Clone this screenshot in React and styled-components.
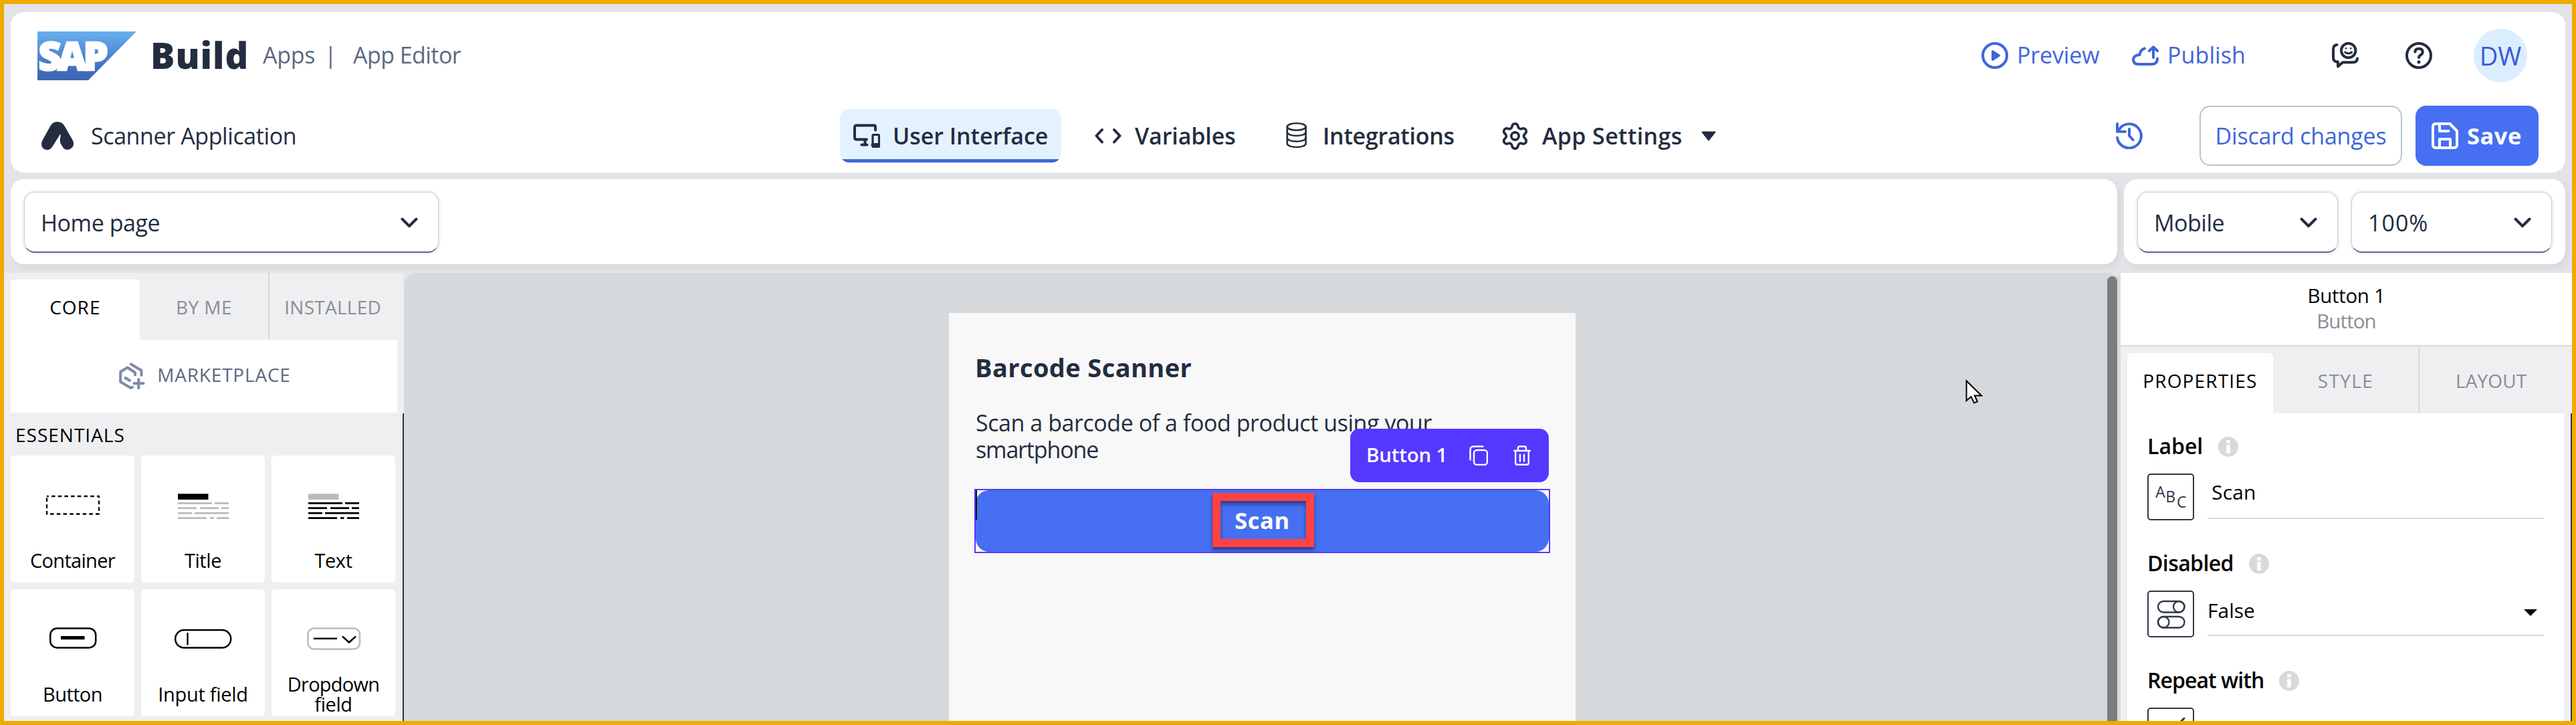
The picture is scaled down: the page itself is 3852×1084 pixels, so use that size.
import React from "react";
import styled, { createGlobalStyle, css } from "styled-components";
import { Settings } from "lucide-react";

const INK = "#232d3f";
const BLUE = "#3f66db";
const VIOLET = "#5538ff";

const GlobalStyle = createGlobalStyle`
  *, *::before, *::after { box-sizing: border-box; }
  body {
    margin: 0;
    font-family: "Open Sans", "Noto Sans", sans-serif;
    color: ${INK};
  }
`;

const Frame = styled.div`
  width: 3852px;
  height: 1084px;
  overflow: hidden;
  display: flex;
  flex-direction: column;
  border: 6px solid #f0ab00;
  background: #e3e4e8;
`;

const Text = styled.span`
  display: block;
  flex: none;
  white-space: nowrap;
  font-size: ${(p) => p.$size || 34}px;
  font-weight: ${(p) => p.$weight || 400};
  letter-spacing: ${(p) => p.$track || 0}px;
  line-height: ${(p) => p.$line || 40}px;
  color: ${(p) => p.$color || "inherit"};
  padding-bottom: ${(p) => (p.$lift || 0) * 2}px;
`;

const Icon = styled.svg`
  display: block;
  flex: none;
  width: ${(p) => p.$w || 40}px;
  height: ${(p) => p.$h || 40}px;
  fill: none;
  stroke: currentColor;
  stroke-width: ${(p) => p.$stroke || 4};
  stroke-linecap: round;
  stroke-linejoin: round;
`;

/* ---------- header ---------- */

const Header = styled.header`
  margin: 12px 10px 0;
  height: 240px;
  flex: none;
  border-radius: 20px;
  background: #fff;
`;

const BrandRow = styled.div`
  height: 130px;
  padding: 0 57px 0 40px;
  display: flex;
  align-items: center;
`;

const Logo = styled.svg`
  display: block;
  width: 148px;
  height: 73px;
  margin-right: 21px;
  overflow: visible;
`;

const Product = styled.div`
  width: 168px;
`;

const Crumb = styled.div`
  width: ${(p) => p.$width}px;
`;

const HeaderLink = styled.a`
  display: flex;
  align-items: center;
  gap: 13px;
  width: ${(p) => p.$width}px;
  color: ${BLUE};
`;

const Push = styled.div`
  margin-left: auto;
  display: flex;
  align-items: center;
`;

const Tools = styled.div`
  display: flex;
  align-items: center;
  gap: 70px;
  margin-right: 62px;
`;

const Avatar = styled.div`
  width: 80px;
  height: 80px;
  border-radius: 50%;
  background: #dbeeff;
  color: #3a5bd7;
  display: flex;
  align-items: center;
  justify-content: center;
`;

const NavRow = styled.div`
  height: 110px;
  padding-right: 40px;
  display: flex;
  align-items: center;
`;

const AppName = styled.div`
  width: 1240px;
  padding-left: 46px;
  display: flex;
  align-items: center;
  gap: 26px;
`;

const NavTabs = styled.nav`
  display: flex;
  gap: 30px;
`;

const NavTab = styled.div`
  width: ${(p) => p.$width}px;
  height: 80px;
  padding-left: 20px;
  display: flex;
  align-items: center;
  gap: ${(p) => p.$gap || 20}px;
  border-radius: 14px;
  ${(p) =>
    p.$active &&
    css`
      background: linear-gradient(#e4f2ff 75px, ${BLUE} 75px);
    `}
`;

const MenuCaret = styled.div`
  margin-left: 7px;
`;

const GearSlot = styled.div`
  width: 40px;
  height: 40px;
  display: flex;
  align-items: center;
  justify-content: center;
  svg { flex: none; }
`;

const DiscardButton = styled.div`
  width: 303px;
  height: 90px;
  margin: 0 20px 0 85px;
  border: 2px solid #bcc2c9;
  border-radius: 16px;
  display: flex;
  align-items: center;
  justify-content: center;
  color: ${BLUE};
`;

const SaveButton = styled.div`
  width: 184px;
  height: 90px;
  padding-left: 24px;
  border-radius: 16px;
  background: #4670f1;
  color: #fff;
  display: flex;
  align-items: center;
  gap: 13px;
`;

const HistoryLink = styled.div`
  color: ${BLUE};
`;

/* ---------- page bar ---------- */

const BarRow = styled.div`
  margin: 10px 10px 0;
  height: 127px;
  flex: none;
  display: flex;
  gap: 10px;
`;

const Bar = styled.div`
  width: ${(p) => p.$width}px;
  padding: 0 20px;
  display: flex;
  align-items: center;
  gap: 20px;
  border-radius: 20px;
  background: #fff;
  box-shadow: 4px 5px 8px rgba(40, 40, 50, 0.06);
`;

const SelectBox = styled.div`
  width: ${(p) => p.$width}px;
  height: 91px;
  margin-top: 2px;
  padding: 1px 30px 0 24px;
  display: flex;
  align-items: center;
  justify-content: space-between;
  border: 1px solid #ccd2da;
  border-bottom: 2px solid #5b6b82;
  border-radius: 16px;
  box-shadow: 0 0 4px rgba(91, 107, 130, 0.32);
`;

/* ---------- workspace ---------- */

const Workspace = styled.main`
  margin-top: 13px;
  flex: 1;
  min-height: 0;
  display: flex;
`;

const Library = styled.aside`
  width: 598px;
  flex: none;
  display: flex;
  flex-direction: column;
  background: #eeeff1;
`;

const TabStrip = styled.div`
  height: 100px;
  flex: none;
  padding: 0 ${(p) => p.$right || 10}px 0 10px;
  display: grid;
  grid-template-columns: repeat(3, 1fr);
`;

const PanelTab = styled.div`
  display: flex;
  align-items: center;
  justify-content: center;
  color: #8b8e96;
  padding-top: 10px;
  ${(p) =>
    p.$divided &&
    css`
      margin-right: -2px;
      border-right: 2px solid #d6d8db;
    `}
  ${(p) =>
    p.$active &&
    css`
      margin-top: 10px;
      padding-top: 0;
      border-radius: 6px 6px 0 0;
      background: #fff;
      color: #000;
    `}
`;

const Marketplace = styled.div`
  height: 110px;
  flex: none;
  margin: 0 10px;
  padding-left: 2px;
  border-bottom: 2px solid #f7f7f8;
  background: #fff;
  display: flex;
  align-items: center;
  justify-content: center;
  gap: 18px;
  color: #5b6980;
  svg { color: #7d8ba7; }
`;

const LibraryBody = styled.div`
  flex: 1;
  min-height: 0;
  padding-left: 10px;
  border-right: 2px solid #2f3547;
`;

const SectionTitle = styled.div`
  height: 63px;
  padding: 1px 0 0 7px;
  display: flex;
  align-items: center;
  color: #000;
`;

const CardGrid = styled.div`
  display: grid;
  grid-template-columns: repeat(3, 185px);
  gap: 10px;
`;

const Card = styled.div`
  height: 190px;
  border-radius: 6px;
  background: #fff;
  color: #000;
`;

const CardLabel = styled.div`
  height: 60px;
  padding-top: 1px;
  display: flex;
  flex-direction: column;
  align-items: center;
  justify-content: center;
`;

const Canvas = styled.section`
  position: relative;
  flex: 1;
  padding-top: 60px;
  display: flex;
  justify-content: center;
  border-radius: 20px 20px 0 0;
  background: #d5d9dc;
`;

const ScrollTrack = styled.div`
  position: absolute;
  top: 5px;
  right: 0;
  bottom: 0;
  width: 20px;
  border-right: 5px solid #d8d9dd;
`;

const ScrollThumb = styled.div`
  height: 100%;
  border-radius: 8px 8px 0 0;
  background: #7b7c7d;
`;

const Pointer = styled.svg`
  position: absolute;
  left: 2334px;
  top: 158px;
  width: 30px;
  height: 40px;
`;

const Phone = styled.div`
  width: 937px;
  padding: 55px 40px 0;
  background: #f8f8f8;
`;

const PageTitle = styled.div`
  height: 89px;
  margin-left: -1px;
`;

const Paragraph = styled.div`
  height: 121px;
`;

const Selection = styled.div`
  position: relative;
  height: 92px;
  background: #fff;
  outline: 2px solid ${VIOLET};
`;

const AppButton = styled.div`
  height: 100%;
  border-radius: 20px;
  background: #4670f1;
  color: #fff;
  display: flex;
  align-items: center;
  justify-content: center;
`;

const DropMark = styled.div`
  position: absolute;
  left: 0;
  top: 0;
  width: 2px;
  height: 44px;
  background: #0c0c12;
`;

const Highlight = styled.div`
  position: absolute;
  left: 354px;
  top: 4px;
  width: 152px;
  height: 81px;
  border: 12px solid #ff4343;
  box-shadow: 0 4px 5px rgba(20, 20, 50, 0.6), inset 0 5px 6px rgba(20, 20, 60, 0.55);
`;

const SelectionBar = styled.div`
  position: absolute;
  right: 0;
  top: -92px;
  width: 297px;
  height: 80px;
  padding: 0 27px 0 24px;
  border-radius: 14px;
  background: ${VIOLET};
  color: #fff;
  display: flex;
  align-items: center;
  justify-content: space-between;
`;

const BarIcons = styled.div`
  display: flex;
  gap: 38px;
`;

/* ---------- inspector ---------- */

const Inspector = styled.aside`
  width: 675px;
  flex: none;
  display: flex;
  flex-direction: column;
  background: #eeeff1;
`;

const InspectorHead = styled.div`
  height: 110px;
  flex: none;
  padding-top: 15px;
  border-bottom: 2px solid #d8d9de;
  background: #fff;
  display: flex;
  flex-direction: column;
  align-items: center;
`;

const InspectorBody = styled.div`
  flex: 1;
  min-height: 0;
  overflow: hidden;
  padding: 0 10px;
  border-right: 2px solid #2f3547;
`;

const PropertyList = styled.div`
  height: 100%;
  padding: 25px 30px 0;
  background: #fff;
  color: #000;
`;

const Property = styled.div`
  height: 175px;
`;

const PropertyName = styled.div`
  height: 50px;
  margin-bottom: 15px;
  display: flex;
  align-items: center;
  gap: 23px;
`;

const PropertyControl = styled.div`
  display: flex;
  gap: 20px;
`;

const BindingBox = styled.div`
  width: 70px;
  height: 70px;
  flex: none;
  border: 2px solid #2f3647;
  border-radius: 5px;
  color: #2f3647;
  svg { margin: -2px; }
`;

const Field = styled.div`
  flex: 1;
  height: 68px;
  padding: 0 10px 0 ${(p) => p.$indent || 0}px;
  border-bottom: 2px solid #d8d9de;
  display: flex;
  align-items: center;
  justify-content: space-between;
`;

/* ---------- drawings ---------- */

const SapLogo = () => (
  <Logo viewBox="0 0 148 73">
    <defs>
      <linearGradient id="sap" x1="0" y1="0" x2="0" y2="1">
        <stop offset="0" stopColor="#69b0f0" />
        <stop offset="0.8" stopColor="#3f6cba" />
        <stop offset="1" stopColor="#3c65b1" />
      </linearGradient>
    </defs>
    <path d="M0 0H148L76 73H0Z" fill="url(#sap)" />
    <text
      x="1.5"
      y="58.3"
      fill="#fff"
      stroke="#fff"
      strokeWidth="2.6"
      fontFamily="Open Sans"
      fontWeight="800"
      fontSize="59"
      letterSpacing="-5"
    >
      SAP
    </text>
  </Logo>
);

const AppMark = () => (
  <Icon viewBox="0 0 48 42" $w={48} $h={42}>
    <path
      d="M23.7 0Q30.5 0 34.3 6L46.7 27.5Q50 34.5 45.5 39Q42 42.5 37.5 41.8Q34 41.3 32.2 38.5L28.6 32.5Q26.8 29.5 28.8 20Q28.8 18.2 27.5 19.4L16.5 37Q13.5 42 8.7 42Q3.5 42 1.2 38Q-1.2 33.5 1.3 28L13.5 6Q17 0 23.7 0Z"
      fill="currentColor"
      stroke="none"
    />
  </Icon>
);

const PlayIcon = () => (
  <Icon viewBox="0 0 40 40">
    <circle cx="20" cy="20" r="18" />
    <path d="M16.5 13.5L26.5 20L16.5 26.5Z" fill="currentColor" strokeWidth="3" />
  </Icon>
);

const CloudIcon = () => (
  <Icon viewBox="0 -5 40 40">
    <path d="M19 4.5Q12.5 6 11.5 14Q2 14.5 2 21.5Q2.5 28 9 28H30Q38 28 38 19.5" />
    <path d="M32 18V2.5M26 8L32 2.3L38 8" />
  </Icon>
);

const FeedbackIcon = () => (
  <Icon viewBox="0 0 40 40">
    <path d="M7.5 4Q2 4.5 2 11V23Q2 29.5 9 29.5V36.5L16 30.3H31Q38 30 38 24.5" />
    <circle cx="24.7" cy="12.5" r="10.7" />
    <path d="M19.7 15Q24.7 19 29.7 15" strokeWidth="3" />
    <circle cx="21.2" cy="9.2" r="1.3" fill="currentColor" stroke="none" />
    <circle cx="28.2" cy="9.2" r="1.3" fill="currentColor" stroke="none" />
  </Icon>
);

const HelpIcon = () => (
  <Icon viewBox="0 0 40 40">
    <circle cx="20" cy="20" r="18" />
    <path d="M14.5 14.5Q14.5 9.7 20 9.7Q25.7 9.7 25.7 14.7Q25.7 17.5 22.5 19.5Q20 21 20 23" />
    <circle cx="20" cy="29.8" r="2.5" fill="currentColor" stroke="none" />
  </Icon>
);

const HistoryIcon = () => (
  <Icon viewBox="0 0 40 40">
    <path d="M2 2V13.7H14" />
    <path d="M2 22.8A18 18 0 1 0 4.9 10.3" />
    <path d="M20 10V20L25.5 26" />
  </Icon>
);

const DevicesIcon = () => (
  <Icon viewBox="0 0 40 40">
    <path d="M33 11.5V6.5Q33 4.5 31 4.5H5Q2 4.5 2 7.5V22.5Q2 25.5 5 25.5H20" />
    <path d="M17.5 26V33M12.5 33.5H20.5" />
    <rect x="29" y="18.5" width="9.5" height="18" rx="1" strokeWidth="3.2" />
    <path d="M29 33.5H38" strokeWidth="5" />
  </Icon>
);

const CodeIcon = () => (
  <Icon viewBox="0 0 40 40">
    <path d="M11 11L2.5 20L11 29.5M29 11L37.5 20L29 29.5" />
  </Icon>
);

const DatabaseIcon = () => (
  <Icon viewBox="0 0 40 40" $stroke={2.6}>
    <ellipse cx="20.7" cy="6.5" rx="13.9" ry="5.2" />
    <path d="M6.8 6.5V31.5C6.8 38.8 34.6 38.8 34.6 31.5V6.5" />
    <path d="M6.8 14.5C6.8 21.8 34.6 21.8 34.6 14.5M6.8 23C6.8 30.3 34.6 30.3 34.6 23" />
  </Icon>
);

const SaveIcon = () => (
  <Icon viewBox="0 0 40 40">
    <path d="M6.5 2H27.5L38 13V33.5Q38 38 33.5 38H6.5Q2 38 2 33.5V6.5Q2 2 6.5 2Z" />
    <path d="M12 3V13H25.5M12 37V25H28V37" />
  </Icon>
);

const Caret = () => (
  <Icon viewBox="0 0 22 15" $w={22} $h={15} $stroke={2}>
    <path d="M1.5 1.5H20.5L11 13.5Z" fill="currentColor" />
  </Icon>
);

const Chevron = () => (
  <Icon viewBox="0 0 26 16" $w={26} $h={16} $stroke={4}>
    <path d="M2.5 2.5L13 13L23.5 2.5" />
  </Icon>
);

const ComponentsIcon = () => (
  <Icon viewBox="0 0 40 40">
    <path d="M19 2.5L34.5 12V19" />
    <path d="M25 18.5V15L13.5 7.5L3.2 14V29L18.5 38L21 36.8" />
    <path d="M10.5 23L17 27M30.3 25V38.5M23.5 31.2H37.5" />
  </Icon>
);

const TextLines = ({ head, body }) => (
  <g stroke="none" fill={body}>
    <rect x="55" y="57.3" width="45.5" height="8.7" fill={head} />
    {[
      [70, [[55, 51], [110, 21]]],
      [77.3, [[55, 28], [88, 28], [120, 11]]],
      [84.8, [[55, 21], [80, 51]]],
      [92.2, [[55, 43], [103, 5.5], [113, 18]]],
    ].map(([y, runs]) =>
      runs.map(([x, w]) => <rect key={`${y}-${x}`} x={x} y={y} width={w} height="2.8" />)
    )}
  </g>
);

const glyphs = {
  container: (
    <rect x="54" y="61" width="78" height="26.5" strokeWidth="2.4" strokeLinecap="butt" strokeDasharray="5.5 4.2" strokeDashoffset="2.7" />
  ),
  title: <TextLines head="#000" body="#b9bac0" />,
  text: <TextLines head="#b9bac0" body="#000" />,
  button: (
    <>
      <rect x="59.2" y="58.4" width="68" height="29" rx="10" strokeWidth="2.5" />
      <rect x="75" y="70" width="35.5" height="5.2" fill="#000" stroke="none" />
    </>
  ),
  input: (
    <>
      <rect x="51.2" y="61" width="83" height="26.5" rx="13" strokeWidth="2.5" />
      <path d="M69.5 66V82.5" strokeWidth="2.4" />
    </>
  ),
  dropdown: (
    <>
      <rect x="54.5" y="58.6" width="77.5" height="31" rx="9" stroke="#b9bac0" strokeWidth="2.5" />
      <path d="M63 73.7H98M106 70.5L116 79.5L126 70.5" strokeWidth="2.6" strokeLinecap="butt" strokeLinejoin="miter" />
    </>
  ),
};

const components = [
  { glyph: "container", lines: [["Container", -0.7]] },
  { glyph: "title", lines: [["Title", -0.4]] },
  { glyph: "text", lines: [["Text", -0.4]] },
  { glyph: "button", lines: [["Button", -0.6]] },
  { glyph: "input", lines: [["Input field", -0.3]] },
  { glyph: "dropdown", lines: [["Dropdown", -0.75], ["field", -0.4]] },
];

const InfoIcon = () => (
  <Icon viewBox="0 0 30 30" $w={30} $h={30}>
    <circle cx="15" cy="15" r="15" fill="#d8d9dd" stroke="none" />
    <path d="M12.2 5H17.8V10H12.2ZM12.2 12.2H17.8V25H12.2Z" fill="#fff" stroke="none" />
  </Icon>
);

const CopyIcon = () => (
  <Icon viewBox="0 0 28 30" $w={28} $h={30} $stroke={2.4}>
    <path d="M1.5 21.5V6.5Q1.5 1.5 6.5 1.5H20.5" />
    <rect x="7" y="7" width="20" height="22" rx="4.5" />
  </Icon>
);

const TrashIcon = () => (
  <Icon viewBox="0 0 26 30" $w={26} $h={30} $stroke={2.4}>
    <path d="M1 8H25M7 7.5V4Q7 1.5 9.5 1.5H16.5Q19 1.5 19 4V7.5" />
    <path d="M3.2 8V26Q3.2 28.8 6 28.8H20Q22.8 28.8 22.8 26V8M10 14V23.5M16 14V23.5" />
  </Icon>
);

const AbcIcon = () => (
  <Icon viewBox="0 0 70 70" $w={70} $h={70}>
    <g fill="currentColor" stroke="none" fontFamily="Open Sans" fontSize="23">
      <text x="12.3" y="35.5">A</text>
      <text x="27.2" y="43.3">B</text>
      <text x="44" y="51">C</text>
    </g>
  </Icon>
);

const TogglesIcon = () => (
  <Icon viewBox="0 0 70 70" $w={70} $h={70} $stroke={2.3}>
    <rect x="16" y="16" width="39.5" height="16.5" rx="8.2" />
    <circle cx="47.2" cy="24.2" r="8.2" />
    <rect x="16" y="39" width="39.5" height="16.5" rx="8.2" />
    <circle cx="24.2" cy="47.2" r="8.2" />
  </Icon>
);

const RepeatIcon = () => (
  <Icon viewBox="0 0 70 70" $w={70} $h={70} $stroke={3}>
    <path d="M55 16L40 31" />
  </Icon>
);

/* ---------- page ---------- */

export default function App() {
  return (
    <Frame>
      <GlobalStyle />
      <Header>
        <BrandRow>
          <SapLogo />
          <Product>
            <Text $size={54} $weight={800} $track={1} $line={60} $lift={1.5}>Build</Text>
          </Product>
          <Crumb $width={92}>
            <Text $track={-0.3} $color="#5b6980" $lift={1}>Apps</Text>
          </Crumb>
          <Crumb $width={43}>
            <Text $color="#5b6980" $lift={1}>|</Text>
          </Crumb>
          <Crumb $width={170}>
            <Text $track={-0.55} $color="#5b6980" $lift={1}>App Editor</Text>
          </Crumb>
          <Push>
            <HeaderLink $width={225}>
              <PlayIcon />
              <Text $track={-0.15} $lift={1}>Preview</Text>
            </HeaderLink>
            <HeaderLink $width={299}>
              <CloudIcon />
              <Text $track={0.1} $lift={1}>Publish</Text>
            </HeaderLink>
            <Tools>
              <FeedbackIcon />
              <HelpIcon />
            </Tools>
            <Avatar>
              <Text $size={38} $lift={0.5}>DW</Text>
            </Avatar>
          </Push>
        </BrandRow>
        <NavRow>
          <AppName>
            <AppMark />
            <Text $track={-0.4} $lift={0.5}>Scanner Application</Text>
          </AppName>
          <NavTabs>
            <NavTab $width={331} $gap={19} $active>
              <DevicesIcon />
              <Text $weight={600} $track={-0.05} $lift={0.5}>User Interface</Text>
            </NavTab>
            <NavTab $width={251}>
              <CodeIcon />
              <Text $weight={600} $track={-0.1} $lift={0.5}>Variables</Text>
            </NavTab>
            <NavTab $width={297} $gap={20}>
              <DatabaseIcon />
              <Text $weight={600} $track={-0.27} $lift={0.5}>Integrations</Text>
            </NavTab>
            <NavTab $width={362} $gap={21}>
              <GearSlot>
                <Settings size={45} strokeWidth={2} />
              </GearSlot>
              <Text $weight={600} $track={0.36} $lift={0.5}>App Settings</Text>
              <MenuCaret>
                <Caret />
              </MenuCaret>
            </NavTab>
          </NavTabs>
          <Push>
            <HistoryLink>
              <HistoryIcon />
            </HistoryLink>
            <DiscardButton>
              <Text $track={-0.2} $lift={0.5}>Discard changes</Text>
            </DiscardButton>
            <SaveButton>
              <SaveIcon />
              <Text $size={34.5} $weight={700} $track={0.5} $lift={0.5}>Save</Text>
            </SaveButton>
          </Push>
        </NavRow>
      </Header>

      <BarRow>
        <Bar $width={3150}>
          <SelectBox $width={620}>
            <Text $track={-0.45}>Home page</Text>
            <Chevron />
          </SelectBox>
        </Bar>
        <Bar $width={660}>
          <SelectBox $width={300}>
            <Text $track={-0.5}>Mobile</Text>
            <Chevron />
          </SelectBox>
          <SelectBox $width={300}>
            <Text $track={1}>100%</Text>
            <Chevron />
          </SelectBox>
        </Bar>
      </BarRow>

      <Workspace>
        <Library>
          <TabStrip>
            <PanelTab $active>
              <Text $size={28} $track={1} $lift={4.5}>CORE</Text>
            </PanelTab>
            <PanelTab $divided>
              <Text $size={28} $track={0.4} $lift={4.5}>BY ME</Text>
            </PanelTab>
            <PanelTab>
              <Text $size={28} $track={0.25} $lift={4.5}>INSTALLED</Text>
            </PanelTab>
          </TabStrip>
          <Marketplace>
            <ComponentsIcon />
            <Text $size={28} $track={0.8} $lift={2}>MARKETPLACE</Text>
          </Marketplace>
          <LibraryBody>
            <SectionTitle>
              <Text $size={28} $track={1}>ESSENTIALS</Text>
            </SectionTitle>
            <CardGrid>
              {components.map(({ glyph, lines }) => (
                <Card key={glyph}>
                  <Icon viewBox="0 0 185 126" $w={185} $h={126}>
                    {glyphs[glyph]}
                  </Icon>
                  <CardLabel>
                    {lines.map(([line, track]) => (
                      <Text key={line} $size={29} $track={track} $line={30}>{line}</Text>
                    ))}
                  </CardLabel>
                </Card>
              ))}
            </CardGrid>
          </LibraryBody>
        </Library>

        <Canvas>
          <Phone>
            <PageTitle>
              <Text $size={38} $weight={700} $track={0.4} $line={52}>Barcode Scanner</Text>
            </PageTitle>
            <Paragraph>
              <Text $track={-0.44}>Scan a barcode of a food product using your</Text>
              <Text $track={-1.15}>smartphone</Text>
            </Paragraph>
            <Selection>
              <AppButton>
                <Text $size={34.5} $weight={700} $track={0.6} $lift={1.5}>Scan</Text>
              </AppButton>
              <DropMark />
              <Highlight />
              <SelectionBar>
                <Text $size={29.5} $weight={600} $track={-0.2} $lift={1}>Button 1</Text>
                <BarIcons>
                  <CopyIcon />
                  <TrashIcon />
                </BarIcons>
              </SelectionBar>
            </Selection>
          </Phone>
          <ScrollTrack>
            <ScrollThumb />
          </ScrollTrack>
          <Pointer viewBox="-2 -2 30 40">
            <path
              d="M0.5 1.5V31L7.5 25L12 34.5L16.8 32.3L12.8 23.5H23Z"
              fill="#fff"
              stroke="#000"
              strokeWidth="2"
            />
          </Pointer>
        </Canvas>

        <Inspector>
          <InspectorHead>
            <Text $size={29.5} $track={-0.3} $line={38} $color="#000">Button 1</Text>
            <Text $size={29.5} $track={-0.9} $line={38} $color="#8b8e96">Button</Text>
          </InspectorHead>
          <TabStrip $right={12}>
            <PanelTab $active>
              <Text $size={28} $track={1.15} $lift={4.5}>PROPERTIES</Text>
            </PanelTab>
            <PanelTab $divided>
              <Text $size={28} $track={1.4} $lift={4.5}>STYLE</Text>
            </PanelTab>
            <PanelTab>
              <Text $size={28} $track={0.1} $lift={4.5}>LAYOUT</Text>
            </PanelTab>
          </TabStrip>
          <InspectorBody>
            <PropertyList>
              <Property>
                <PropertyName>
                  <Text $size={32} $weight={600} $lift={1}>Label</Text>
                  <InfoIcon />
                </PropertyName>
                <PropertyControl>
                  <BindingBox><AbcIcon /></BindingBox>
                  <Field $indent={6}>
                    <Text $size={30} $track={0.2} $lift={5}>Scan</Text>
                  </Field>
                </PropertyControl>
              </Property>
              <Property>
                <PropertyName>
                  <Text $size={32} $weight={600} $track={-0.6} $lift={1}>Disabled</Text>
                  <InfoIcon />
                </PropertyName>
                <PropertyControl>
                  <BindingBox><TogglesIcon /></BindingBox>
                  <Field>
                    <Text $size={30} $lift={3}>False</Text>
                    <Icon viewBox="0 0 20 10" $w={20} $h={10}>
                      <path d="M0 0H20L10 10Z" fill="#000" stroke="none" />
                    </Icon>
                  </Field>
                </PropertyControl>
              </Property>
              <Property>
                <PropertyName>
                  <Text $size={32} $weight={600} $track={-0.95} $lift={1}>Repeat with</Text>
                  <InfoIcon />
                </PropertyName>
                <PropertyControl>
                  <BindingBox><RepeatIcon /></BindingBox>
                </PropertyControl>
              </Property>
            </PropertyList>
          </InspectorBody>
        </Inspector>
      </Workspace>
    </Frame>
  );
}
